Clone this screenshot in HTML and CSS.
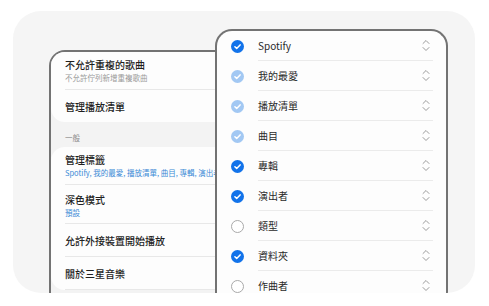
FILE: index.html
```html
<!DOCTYPE html>
<html lang="zh-Hant">
<head>
  <meta charset="UTF-8">
  <meta name="viewport" content="width=device-width, initial-scale=1.0">
  <title>三星音樂 - 設定</title>
  <link rel="stylesheet" href="styles.css">
</head>
<body>

  <!-- Backdrop card -->
  <div class="stage">

    <!-- Settings phone -->
    <div class="phone settings">
      <div class="group">
        <div class="item">
          <p class="title">不允許重複的歌曲</p>
          <p class="sub">不允許佇列新增重複歌曲</p>
        </div>
        <div class="item single last">
          <p class="title">管理播放清單</p>
        </div>
      </div>

      <p class="group-label">一般</p>

      <div class="group">
        <div class="item">
          <p class="title">管理標籤</p>
          <p class="sub blue">Spotify, 我的最愛, 播放清單, 曲目, 專輯, 演出者</p>
        </div>
        <div class="item dark-mode">
          <p class="title">深色模式</p>
          <p class="sub blue">預設</p>
        </div>
        <div class="item single">
          <p class="title">允許外接裝置開始播放</p>
        </div>
        <div class="item single">
          <p class="title">關於三星音樂</p>
        </div>
      </div>
    </div>

    <!-- Tabs phone -->
    <div class="phone tabs">
      <ul id="tab-list"></ul>
    </div>

  </div>

  <script>
    // Tabs and their state: on, dim (locked on), off
    const tabs = [
      ["Spotify", "on"],
      ["我的最愛", "dim"],
      ["播放清單", "dim"],
      ["曲目", "dim"],
      ["專輯", "on"],
      ["演出者", "on"],
      ["類型", "off"],
      ["資料夾", "on"],
      ["作曲者", "off"]
    ];

    const checkSvg = `<svg viewBox="0 0 13 13" width="13" height="13"><circle cx="6.5" cy="6.5" r="6.5" class="fill"/><path d="M3.9 6.7 L5.7 8.4 L9.1 4.9" fill="none" stroke="#fff" stroke-width="1.5" stroke-linecap="round" stroke-linejoin="round"/></svg>`;
    const emptySvg = `<svg viewBox="0 0 13 13" width="13" height="13"><circle cx="6.5" cy="6.5" r="6" fill="#fff" stroke="#a9a9a9" stroke-width="1"/></svg>`;
    const moveSvg = `<svg viewBox="0 0 8 13" width="8" height="13"><path d="M1 4.5 L4 1.5 L7 4.5 M1 8.5 L4 11.5 L7 8.5" fill="none" stroke="#9a9a9a" stroke-width="1" stroke-linecap="round" stroke-linejoin="round"/></svg>`;

    const list = document.getElementById("tab-list");
    tabs.forEach(([name, state]) => {
      const li = document.createElement("li");
      li.className = "tab " + state;
      li.innerHTML = `
        <span class="check">${state === "off" ? emptySvg : checkSvg}</span>
        <div class="tab-body">
          <span class="tab-name">${name}</span>
          <span class="move">${moveSvg}</span>
        </div>
      `;
      list.appendChild(li);
    });
  </script>

</body>
</html>
```

FILE: styles.css
```css
/* General Styling */
* {
  margin: 0;
  padding: 0;
  box-sizing: border-box;
  font-family: "Noto Sans CJK TC", "Noto Sans", sans-serif;
}

body {
  background-color: #fff;
  padding: 11px 14px 13px 13px;
}

/* Backdrop card */
.stage {
  display: flex;
  align-items: flex-start;
  height: 282px;
  background-color: #f5f5f5;
  border-radius: 28px;
  overflow: hidden;
}

/* Phone frames */
.phone {
  border: 2px solid #737373;
  border-bottom: none;
  height: 300px;
  flex-shrink: 0;
}

.settings {
  width: 240px;
  margin-top: 39px;
  margin-left: 36px;
  border-radius: 16px 16px 0 0;
  background-color: #f3f3f3;
}

.tabs {
  position: relative;
  z-index: 1;
  width: 233px;
  margin-top: 18px;
  margin-left: -74px;
  border-radius: 17px 17px 0 0;
  background-color: #fdfdfd;
}

/* Settings list */
.group {
  background-color: #fdfdfd;
  border-radius: 14px;
  padding-left: 14px;
  padding-right: 14px;
}

.item {
  padding: 5px 0 6px;
  border-bottom: 1px solid #e8e8e8;
  white-space: nowrap;
}

.item.dark-mode {
  padding: 7px 0 5px;
}

.item.single {
  padding: 9px 0 8px;
}

.item.last {
  border-bottom: none;
}

.title {
  font-size: 10px;
  line-height: 15px;
  color: #1f1f1f;
  font-weight: 500;
}

.sub {
  font-size: 7.5px;
  line-height: 11px;
  color: #9a9a9a;
}

.sub.blue {
  color: #3a8ad6;
}

.group-label {
  font-size: 7.5px;
  line-height: 11px;
  color: #8a8a8a;
  padding: 10px 14px 4px;
}

/* Tabs list */
#tab-list {
  list-style-type: none;
}

.tab {
  display: flex;
  align-items: center;
  padding-left: 14px;
  padding-right: 13px;
}

.check {
  display: flex;
  width: 13px;
  height: 13px;
  margin-right: 14px;
}

.tab.on .fill {
  fill: #1273ea;
}

.tab.dim .fill {
  fill: #a2c8f3;
}

.tab-body {
  flex: 1;
  display: flex;
  justify-content: space-between;
  align-items: center;
  height: 30px;
  border-bottom: 1px solid #ebebeb;
  padding-right: 3px;
}

.tab-name {
  font-size: 10px;
  color: #2a2a2a;
}

.move {
  display: flex;
}
```
